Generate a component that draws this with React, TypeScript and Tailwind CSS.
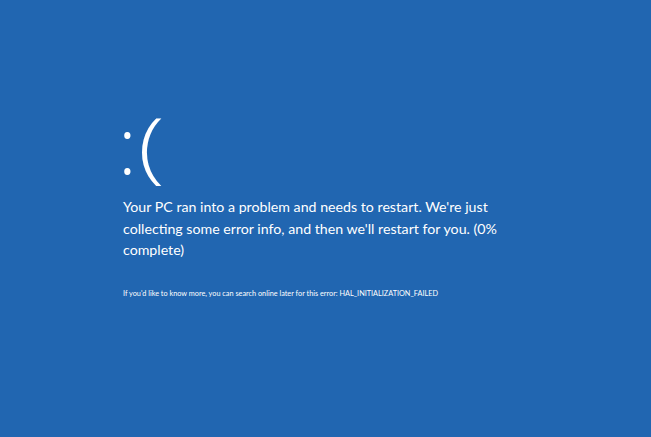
export default function App() {
  return (
    <div className="w-[651px] h-[437px] bg-[#2166b1] text-white overflow-hidden" style={{ fontFamily: 'Lato, "Open Sans", sans-serif' }}>
      <div className="pl-[118px] pt-[98px] flex flex-col">
        <div className="flex items-start h-[98px] font-light text-[78px] leading-[92px]" style={{ fontFamily: '"Open Sans", sans-serif' }}>
          <span>:</span>
          <span className="ml-[1px] scale-x-125 origin-left">(</span>
        </div>
        <p className="mt-[0px] pl-[5px] text-[14.2px] leading-[21.5px] whitespace-nowrap">
          Your PC ran into a problem and needs to restart. We're just
          <br />
          collecting some error info, and then we'll restart for you. (0%
          <br />
          complete)
        </p>
        <p className="mt-[27px] pl-[5px] text-[7.3px] leading-[12px] whitespace-nowrap">
          If you'd like to know more, you can search online later for this error: HAL_INITIALIZATION_FAILED
        </p>
      </div>
    </div>
  );
}
